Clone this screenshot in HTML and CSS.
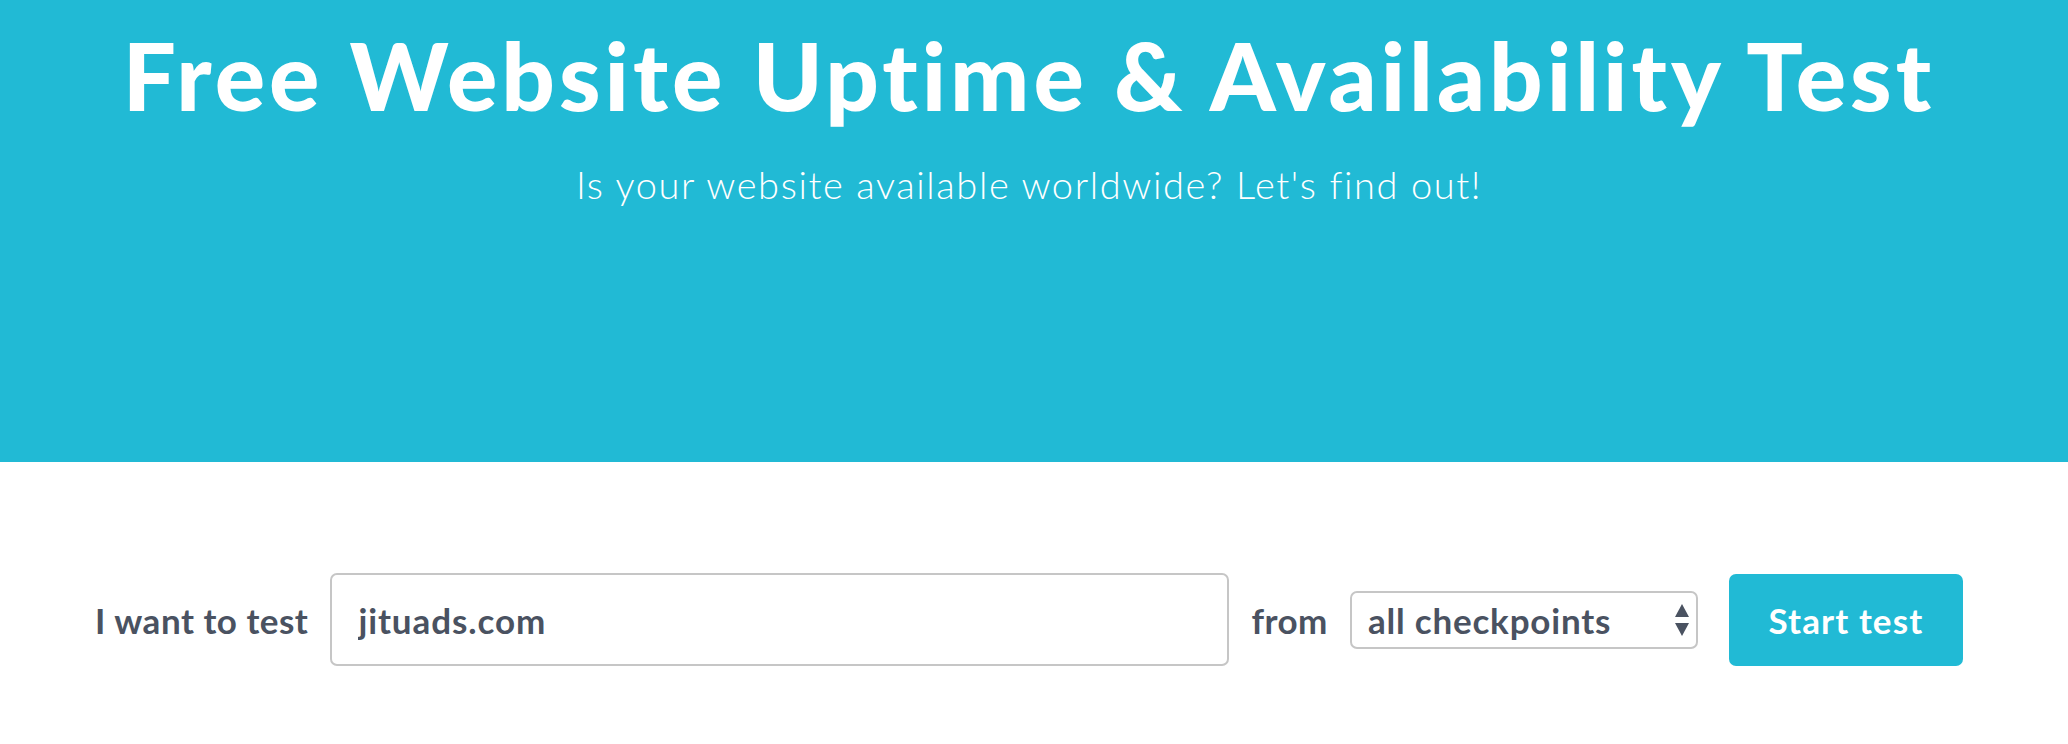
FILE: index.html
```html
<!DOCTYPE html>
<html lang="en">

<head>
  <meta charset="UTF-8" />
  <title>Free Website Uptime &amp; Availability Test</title>
  <meta name="viewport" content="width=device-width, initial-scale=1.0" />
  <link rel="stylesheet" href="styles.css">
</head>

<body>

  <header class="hero">
    <h1>Free Website Uptime &amp; Availability Test</h1>
    <p class="subtitle">Is your website available worldwide? Let's find out!</p>
  </header>

  <form class="test-form" id="testForm">
    <label for="url">I want to test</label>
    <input type="text" id="url" class="url-input" value="jituads.com" />

    <label for="checkpoint">from</label>
    <div class="select-wrap">
      <select id="checkpoint">
        <option>all checkpoints</option>
      </select>
      <svg class="select-arrows" width="16" height="34" viewBox="0 0 16 34">
        <path d="M8 1 L15 14 L1 14 Z" />
        <path d="M1 20 L15 20 L8 33 Z" />
      </svg>
    </div>

    <button type="submit">Start test</button>
  </form>

</body>

</html>
```

FILE: styles.css
```css
* {
  box-sizing: border-box;
}

body {
  margin: 0;
  padding: 0;
  font-family: "Lato", "Noto Sans", sans-serif;
  background-color: #fff;
  color: #4a5261;
}

.hero {
  background-color: #21bad5;
  color: #fff;
  height: 462px;
  padding: 19px 10px 0 0;
  text-align: center;
}

.hero h1 {
  margin: 0;
  font-size: 94px;
  font-weight: 900;
  line-height: 1.2;
  letter-spacing: 4px;
}

.subtitle {
  margin: 30px 0 0;
  font-size: 38px;
  font-weight: 300;
  line-height: 1.2;
  letter-spacing: 1.6px;
}

.test-form {
  display: flex;
  align-items: center;
  justify-content: center;
  gap: 22px;
  padding: 111px 10px 0 0;
}

.test-form label {
  font-size: 35px;
  font-weight: 700;
  letter-spacing: 0.5px;
}

.url-input {
  width: 899px;
  height: 93px;
  padding: 0 26px;
  border: 2px solid #c6c6c6;
  border-radius: 7px;
  font-family: inherit;
  font-size: 35px;
  font-weight: 700;
  letter-spacing: 0.9px;
  color: #4a5261;
  outline: none;
}

.select-wrap {
  position: relative;
}

.select-wrap select {
  width: 348px;
  height: 58px;
  padding: 0 16px;
  border: 2px solid #c6c6c6;
  border-radius: 7px;
  background-color: #fff;
  font-family: inherit;
  font-size: 35px;
  font-weight: 700;
  letter-spacing: 0.8px;
  color: #4a5261;
  appearance: none;
  -webkit-appearance: none;
}

.select-arrows {
  position: absolute;
  right: 8px;
  top: 12px;
  fill: #4a5261;
  pointer-events: none;
}

button {
  width: 234px;
  height: 92px;
  margin-left: 9px;
  background-color: #21bad5;
  color: #fff;
  border: none;
  border-radius: 7px;
  font-family: inherit;
  font-size: 35px;
  font-weight: 700;
  letter-spacing: 1.1px;
  cursor: pointer;
}
```
